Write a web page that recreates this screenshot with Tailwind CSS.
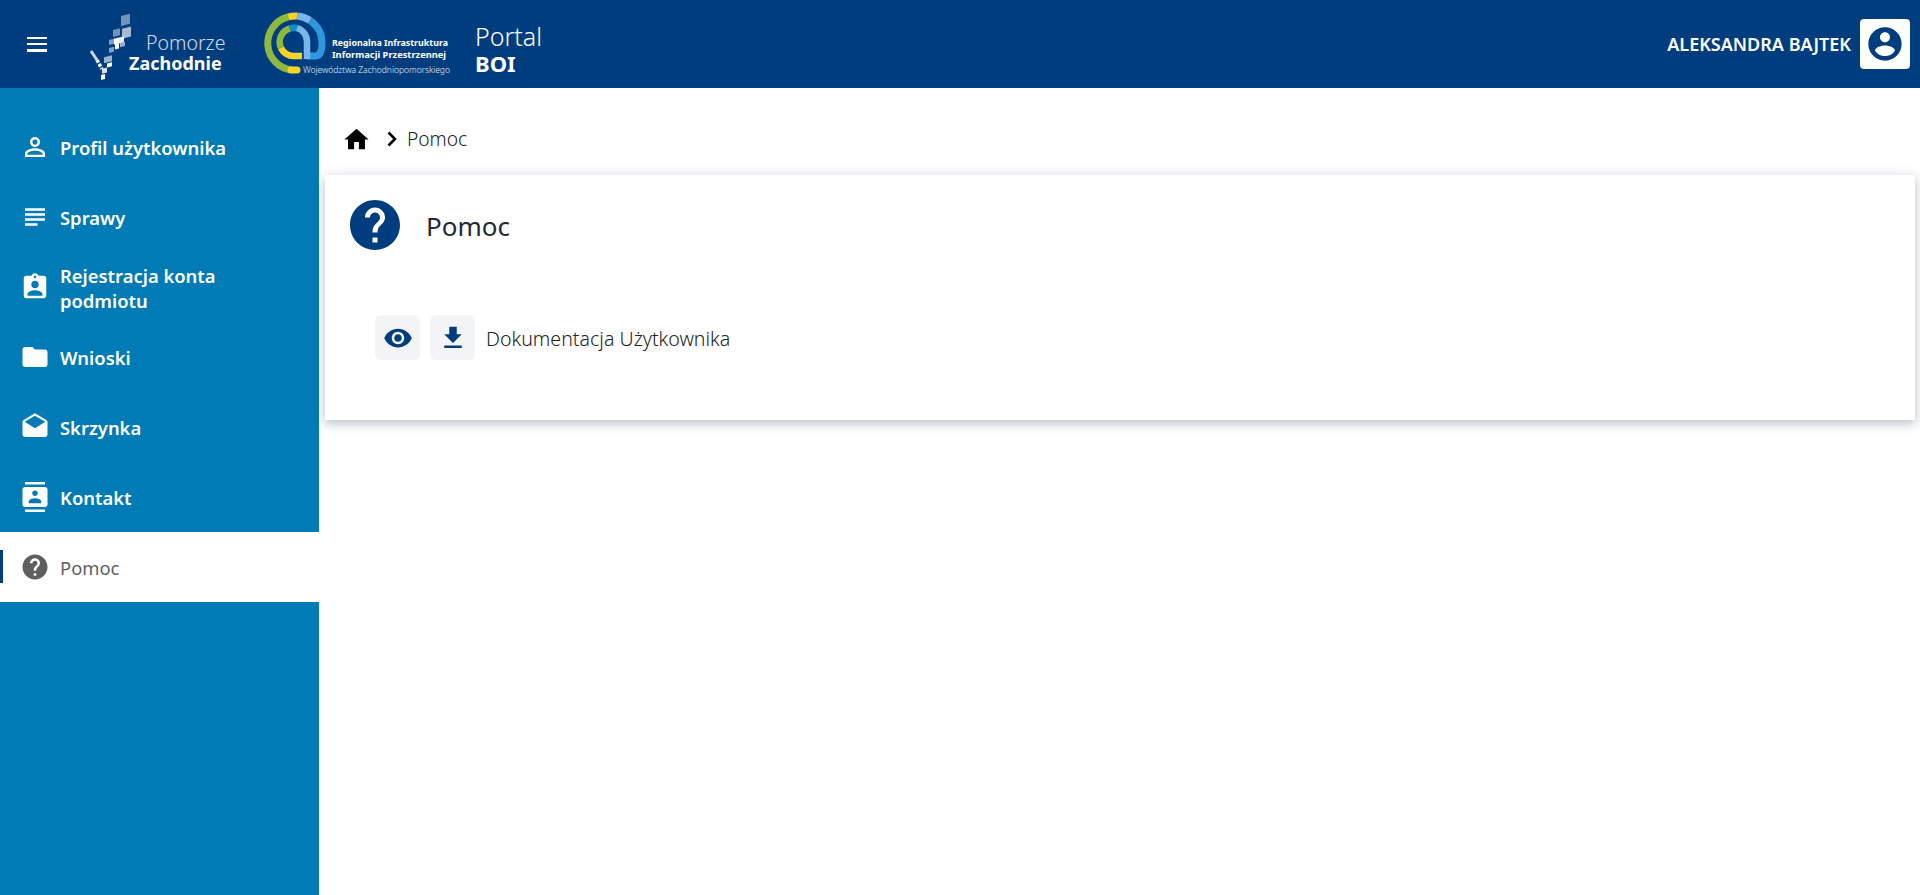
<!DOCTYPE html>
<html lang="pl">
<head>
    <meta charset="UTF-8">
    <meta name="viewport" content="width=device-width, initial-scale=1.0">
    <title>Portal BOI</title>
    <script src="https://cdn.jsdelivr.net/npm/@tailwindcss/browser@4"></script>
</head>
<body class="h-[895px] overflow-hidden bg-white font-['Noto_Sans',sans-serif] text-[#1f2937]">

    <!-- Top bar -->
    <header class="h-[88px] bg-[#003d7f] flex items-center text-white">
        <button class="ml-[27px] w-[20px] h-[15px] flex flex-col justify-between">
            <span class="block h-[2.5px] bg-white"></span>
            <span class="block h-[2.5px] bg-white"></span>
            <span class="block h-[2.5px] bg-white"></span>
        </button>

        <!-- Pomorze Zachodnie logo -->
        <svg class="ml-[38px] w-[44px] h-[66px] shrink-0 overflow-visible" viewBox="0 0 44 66" fill="#fff">
            <g transform="skewY(-14) translate(0 8)">
                <rect x="36" y="6" width="9" height="10" opacity=".45"/>
                <rect x="28" y="18" width="7" height="7" opacity=".45"/>
                <rect x="37" y="19" width="9" height="10" opacity=".65"/>
                <rect x="24" y="27" width="5" height="5" opacity=".5"/>
                <rect x="29" y="27" width="5" height="6"/>
                <rect x="34" y="27" width="5" height="6" opacity=".9"/>
                <rect x="35" y="33" width="5" height="4" opacity=".6"/>
                <rect x="30" y="33" width="4" height="5"/>
                <rect x="24" y="35" width="5" height="5" opacity=".5"/>
                <rect x="19" y="43" width="8" height="6" opacity=".6"/>
                <rect x="22" y="50" width="5" height="4"/>
                <rect x="17" y="54" width="5" height="5" opacity=".85"/>
                <rect x="16" y="60" width="4" height="5"/>
            </g>
            <path d="M6 40 12 49" stroke="#fff" stroke-width="3" opacity=".8"/>
            <path d="M12 49 17 58" stroke="#fff" stroke-width="3.500" stroke-dasharray="3 1.500"/>
        </svg>
        <div class="mt-[17px] w-[96px] shrink-0 flex flex-col">
            <span class="ml-[17px] text-[19.500px] leading-[20px] font-light text-white/80 whitespace-nowrap">Pomorze</span>
            <span class="text-[18px] leading-[20px] font-bold whitespace-nowrap">Zachodnie</span>
        </div>

        <!-- RIIP logo -->
        <svg class="ml-[35px] w-[70px] h-[70px] shrink-0" viewBox="0 0 70 70" fill="none">
            <path d="M32 61A27 27 0 0 1 28 8" stroke="#8fb83e" stroke-width="7"/>
            <path d="M31 61H37" stroke="#f5d327" stroke-width="7" stroke-linecap="round"/>
            <path d="M28 8A27 27 0 0 1 37 7" stroke="#f5d327" stroke-width="7"/>
            <path d="M37 7A27 27 0 0 1 50 11.500" stroke="#79b7ea" stroke-width="7"/>
            <path d="M50 11.500A27 27 0 0 1 62 34C62 43 60 47 55 47H46" stroke="#2f97dc" stroke-width="7"/>
            <path d="M30 19.500A14 14 0 0 0 21 39" stroke="#8fb83e" stroke-width="6.500"/>
            <path d="M21 39A14 14 0 0 0 34 47H42" stroke="#f5d327" stroke-width="6.500"/>
            <path d="M30 19.500A14 14 0 0 1 37 19" stroke="#0f8fd0" stroke-width="6.500"/>
            <path d="M37 19A14 14 0 0 1 47 33V50" stroke="#79b7ea" stroke-width="6.500"/>
        </svg>
        <div class="ml-[2px] mt-[24px] w-[117px] shrink-0 flex flex-col">
            <span class="text-[8.900px] leading-[12px] font-bold whitespace-nowrap">Regionalna Infrastruktura</span>
            <span class="text-[9.300px] leading-[11px] font-bold whitespace-nowrap">Informacji Przestrzennej</span>
            <span class="mt-[4px] -ml-[29px] text-[8.500px] leading-[11px] font-light text-white/90 whitespace-nowrap">Województwa Zachodniopomorskiego</span>
        </div>

        <div class="ml-[26px] mt-[11px] flex flex-col">
            <span class="text-[25px] leading-[28px] font-light">Portal</span>
            <span class="text-[22px] leading-[27px] font-bold">BOI</span>
        </div>

        <div class="ml-auto mr-[10px] flex items-center">
            <span class="text-[18px] font-semibold whitespace-nowrap">ALEKSANDRA BAJTEK</span>
            <div class="ml-[9px] w-[50px] h-[50px] bg-white rounded-[4px] flex items-center justify-center">
                <svg class="w-[40px] h-[40px] text-[#003d7f]" viewBox="0 0 24 24" fill="currentColor"><path d="M12 2C6.480 2 2 6.480 2 12s4.480 10 10 10 10-4.480 10-10S17.520 2 12 2zm0 3c1.660 0 3 1.340 3 3s-1.340 3-3 3-3-1.340-3-3 1.340-3 3-3zm0 14.200c-2.500 0-4.710-1.280-6-3.220.030-1.990 4-3.080 6-3.080 1.990 0 5.970 1.090 6 3.080-1.290 1.940-3.500 3.220-6 3.220z"/></svg>
            </div>
        </div>
    </header>

    <div class="flex h-[807px]">
        <!-- Sidebar -->
        <nav class="w-[319px] shrink-0 bg-[#007bb5] pt-[24px] text-white">
            <a class="h-[70px] flex items-center pl-[20px] pr-[24px]">
                <svg class="w-[30px] h-[30px] shrink-0 mr-[10px]" viewBox="0 0 24 24" fill="currentColor"><path d="M12 5.900c1.160 0 2.100.940 2.100 2.100s-.940 2.100-2.100 2.100S9.900 9.160 9.900 8s.940-2.100 2.100-2.100m0 9c2.970 0 6.100 1.460 6.100 2.100v1.100H5.900V17c0-.640 3.130-2.100 6.100-2.100M12 4C9.790 4 8 5.790 8 8s1.790 4 4 4 4-1.790 4-4-1.790-4-4-4zm0 9c-2.670 0-8 1.340-8 4v3h16v-3c0-2.660-5.330-4-8-4z"/></svg>
                <span class="pt-[2px] text-[18.400px] font-semibold">Profil użytkownika</span>
            </a>
            <a class="h-[70px] flex items-center pl-[20px] pr-[24px]">
                <svg class="w-[30px] h-[30px] shrink-0 mr-[10px]" viewBox="0 0 24 24" fill="currentColor"><path d="M14 17H4v2h10v-2zm6-8H4v2h16V9zM4 15h16v-2H4v2zM4 5v2h16V5H4z"/></svg>
                <span class="pt-[2px] text-[18.400px] font-semibold">Sprawy</span>
            </a>
            <a class="h-[70px] flex items-center pl-[20px] pr-[24px]">
                <svg class="w-[30px] h-[30px] shrink-0 mr-[10px]" viewBox="0 0 24 24" fill="currentColor"><path d="M19 3h-4.180C14.400 1.840 13.300 1 12 1c-1.300 0-2.400.840-2.820 2H5c-1.100 0-2 .900-2 2v14c0 1.100.900 2 2 2h14c1.100 0 2-.900 2-2V5c0-1.100-.900-2-2-2zm-7 0c.550 0 1 .450 1 1s-.450 1-1 1-1-.450-1-1 .450-1 1-1zm0 4c1.660 0 3 1.340 3 3s-1.340 3-3 3-3-1.340-3-3 1.340-3 3-3zm6 12H6v-1.400c0-2 4-3.100 6-3.100s6 1.100 6 3.100V19z"/></svg>
                <span class="pt-[2px] text-[18.400px] leading-[25px] font-semibold w-[200px]">Rejestracja konta podmiotu</span>
            </a>
            <a class="h-[70px] flex items-center pl-[20px] pr-[24px]">
                <svg class="w-[30px] h-[30px] shrink-0 mr-[10px]" viewBox="0 0 24 24" fill="currentColor"><path d="M10 4H4c-1.100 0-2 .900-2 2v12c0 1.100.900 2 2 2h16c1.100 0 2-.900 2-2V8c0-1.100-.900-2-2-2h-8l-2-2z"/></svg>
                <span class="pt-[2px] text-[18.400px] font-semibold">Wnioski</span>
            </a>
            <a class="h-[70px] flex items-center pl-[20px] pr-[24px]">
                <svg class="w-[30px] h-[30px] shrink-0 mr-[10px]" viewBox="0 0 24 24" fill="currentColor"><path d="M21.990 8c0-.720-.370-1.350-.940-1.700L12 1 2.950 6.300C2.380 6.650 2 7.280 2 8v10c0 1.100.900 2 2 2h16c1.100 0 2-.900 2-2l-.010-10zM12 13 3.740 7.840 12 3l8.260 4.840L12 13z"/></svg>
                <span class="pt-[2px] text-[18.400px] font-semibold">Skrzynka</span>
            </a>
            <a class="h-[70px] flex items-center pl-[20px] pr-[24px]">
                <svg class="w-[30px] h-[30px] shrink-0 mr-[10px]" viewBox="0 0 24 24" fill="currentColor"><path d="M20 0H4v2h16V0zM4 24h16v-2H4v2zM20 4H4c-1.100 0-2 .900-2 2v12c0 1.100.900 2 2 2h16c1.100 0 2-.900 2-2V6c0-1.100-.900-2-2-2zm-8 2.750c1.240 0 2.250 1.010 2.250 2.250s-1.010 2.250-2.250 2.250S9.750 10.240 9.750 9 10.760 6.750 12 6.750zM17 17H7v-1.500c0-1.670 3.330-2.500 5-2.500s5 .830 5 2.500V17z"/></svg>
                <span class="pt-[2px] text-[18.400px] font-semibold">Kontakt</span>
            </a>
            <a class="relative h-[70px] flex items-center pl-[20px] pr-[24px] bg-white text-[#5f5f5f]">
                <span class="absolute left-0 top-[18px] w-[3px] h-[33px] bg-[#003d7f]"></span>
                <svg class="w-[30px] h-[30px] shrink-0 mr-[10px]" viewBox="0 0 24 24" fill="currentColor"><path d="M12 2C6.480 2 2 6.480 2 12s4.480 10 10 10 10-4.480 10-10S17.520 2 12 2zm1 17h-2v-2h2v2zm2.070-7.750-.900.920C13.450 12.900 13 13.500 13 15h-2v-.500c0-1.100.450-2.100 1.170-2.830l1.240-1.260c.370-.360.590-.860.590-1.410 0-1.100-.900-2-2-2s-2 .900-2 2H8c0-2.210 1.790-4 4-4s4 1.790 4 4c0 .880-.360 1.680-.930 2.250z"/></svg>
                <span class="pt-[2px] text-[18.400px] font-normal">Pomoc</span>
            </a>
        </nav>

        <!-- Main content -->
        <main class="flex-1 pl-[6px] pr-[5px]">
            <div class="h-[87px] flex items-center pl-[17px] pt-[15px] text-[#222]">
                <svg class="w-[29px] h-[29px] text-black" viewBox="0 0 24 24" fill="currentColor"><path d="M10 20v-6h4v6h5v-8h3L12 3 2 12h3v8z"/></svg>
                <svg class="ml-[15px] w-[12px] h-[16px] text-black" viewBox="0 0 12 16" fill="none" stroke="currentColor" stroke-width="2.600"><path d="M2.500 1.500 9 8l-6.500 6.500"/></svg>
                <span class="ml-[9px] text-[19.200px] font-light">Pomoc</span>
            </div>

            <section class="h-[245px] bg-white shadow-[0_4px_10px_rgba(55,75,110,0.3),0_0_12px_rgba(55,75,110,0.08)]">
                <div class="flex items-center pt-[20px] pl-[20px]">
                    <svg class="w-[60px] h-[60px] text-[#003d7f]" viewBox="0 0 24 24" fill="currentColor"><path d="M12 2C6.480 2 2 6.480 2 12s4.480 10 10 10 10-4.480 10-10S17.520 2 12 2zm1 17h-2v-2h2v2zm2.070-7.750-.900.920C13.450 12.900 13 13.500 13 15h-2v-.500c0-1.100.450-2.100 1.170-2.830l1.240-1.260c.370-.360.590-.860.590-1.410 0-1.100-.900-2-2-2s-2 .900-2 2H8c0-2.210 1.790-4 4-4s4 1.790 4 4c0 .880-.360 1.680-.930 2.250z"/></svg>
                    <h1 class="ml-[21px] pt-[3px] text-[26px] font-normal">Pomoc</h1>
                </div>
                <div class="flex items-center mt-[60px] pl-[50px]">
                    <button class="w-[45px] h-[45px] rounded-[6px] bg-[#f3f4f6] flex items-center justify-center">
                        <svg class="w-[30px] h-[30px] text-[#003d7f]" viewBox="0 0 24 24" fill="currentColor"><path d="M12 4.500C7 4.500 2.730 7.610 1 12c1.730 4.390 6 7.500 11 7.500s9.270-3.110 11-7.500c-1.730-4.390-6-7.500-11-7.500zM12 17c-2.760 0-5-2.240-5-5s2.240-5 5-5 5 2.240 5 5-2.240 5-5 5zm0-8c-1.660 0-3 1.340-3 3s1.340 3 3 3 3-1.340 3-3-1.340-3-3-3z"/></svg>
                    </button>
                    <button class="ml-[10px] w-[45px] h-[45px] rounded-[6px] bg-[#f3f4f6] flex items-center justify-center">
                        <svg class="w-[30px] h-[30px] text-[#003d7f]" viewBox="0 0 24 24" fill="currentColor"><path d="M19 9h-4V3H9v6H5l7 7 7-7zM5 18v2h14v-2H5z"/></svg>
                    </button>
                    <span class="ml-[11px] pt-[2px] text-[19.600px] font-light text-[#222]">Dokumentacja Użytkownika</span>
                </div>
            </section>
        </main>
    </div>
</body>
</html>
